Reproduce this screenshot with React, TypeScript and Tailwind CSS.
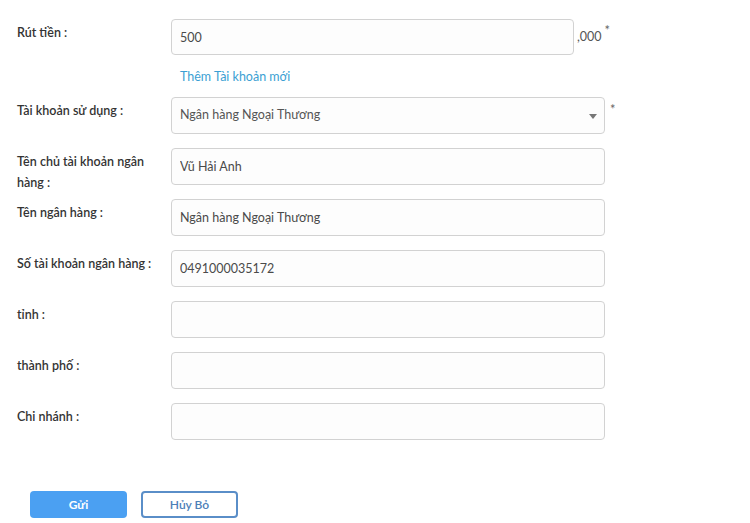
import React from 'react';

const labelCls = "w-[154px] shrink-0 pt-[3px] pr-[8px] text-[12.5px] leading-[21px] font-semibold text-[#333]";
const inputCls = "h-[37px] w-[434px] rounded-[4px] border border-[#d2d2d2] bg-[#fdfdfd] px-[8px] text-[12.5px] text-[#4a4a4a] outline-none";

const fields = [
  { label: 'Tên chủ tài khoản ngân hàng :', value: 'Vũ Hải Anh' },
  { label: 'Tên ngân hàng :', value: 'Ngân hàng Ngoại Thương' },
  { label: 'Số tài khoản ngân hàng :', value: '0491000035172' },
  { label: 'tỉnh :', value: '' },
  { label: 'thành phố :', value: '' },
  { label: 'Chi nhánh :', value: '' },
];

const App: React.FC = () => {
  return (
    <div className="min-h-screen w-[750px] bg-white pl-[17px] pt-[19px]" style={{ fontFamily: 'Lato, "Noto Sans", sans-serif' }}>
      {/* số tiền */}
      <div className="flex h-[36px]">
        <div className={labelCls}>Rút tiền :</div>
        <input
          className="h-[36px] w-[403px] rounded-[4px] border border-[#d2d2d2] bg-[#fdfdfd] px-[8px] text-[12.5px] text-[#4a4a4a] outline-none"
          defaultValue="500"
        />
        <span className="ml-[3px] self-end pb-[8px] text-[12.5px] text-[#555]">,000</span>
        <span className="ml-[3px] mt-[5px] text-[13px] leading-none text-[#666]">*</span>
      </div>

      <div className="flex h-[42px] items-center pl-[163px] pt-[2px]">
        <a href="#" className="text-[12.5px] text-[#3b9fd3]">Thêm Tài khoản mới</a>
      </div>

      <div className="flex h-[37px]">
        <div className={labelCls}>Tài khoản sử dụng :</div>
        <div className="relative h-[37px] w-[434px] rounded-[4px] border border-[#d2d2d2] bg-[#fdfdfd]">
          <div className="flex h-full items-center px-[8px] text-[12.5px] text-[#555]">Ngân hàng Ngoại Thương</div>
          <div className="absolute right-[7px] top-[16px] h-0 w-0 border-x-[4px] border-t-[5px] border-x-transparent border-t-[#777]" />
        </div>
        <span className="ml-[5px] mt-[6px] text-[13px] leading-none text-[#666]">*</span>
      </div>

      <div className="mt-[14px] flex flex-col gap-[14px]">
        {fields.map(f => (
          <div key={f.label} className="flex h-[37px]">
            <div className={labelCls}>{f.label}</div>
            <input className={inputCls} defaultValue={f.value} />
          </div>
        ))}
      </div>

      <div className="mt-[51px] flex gap-[14px] pl-[13px]">
        <button className="h-[27px] w-[97px] rounded-[4px] bg-[#4ba0f2] text-[12px] font-bold text-white">Gửi</button>
        <button className="h-[27px] w-[97px] rounded-[4px] border-2 border-[#5a8ec8] bg-white text-[12px] font-semibold text-[#4d80b8]">Hủy Bỏ</button>
      </div>
    </div>
  );
};

export default App;
